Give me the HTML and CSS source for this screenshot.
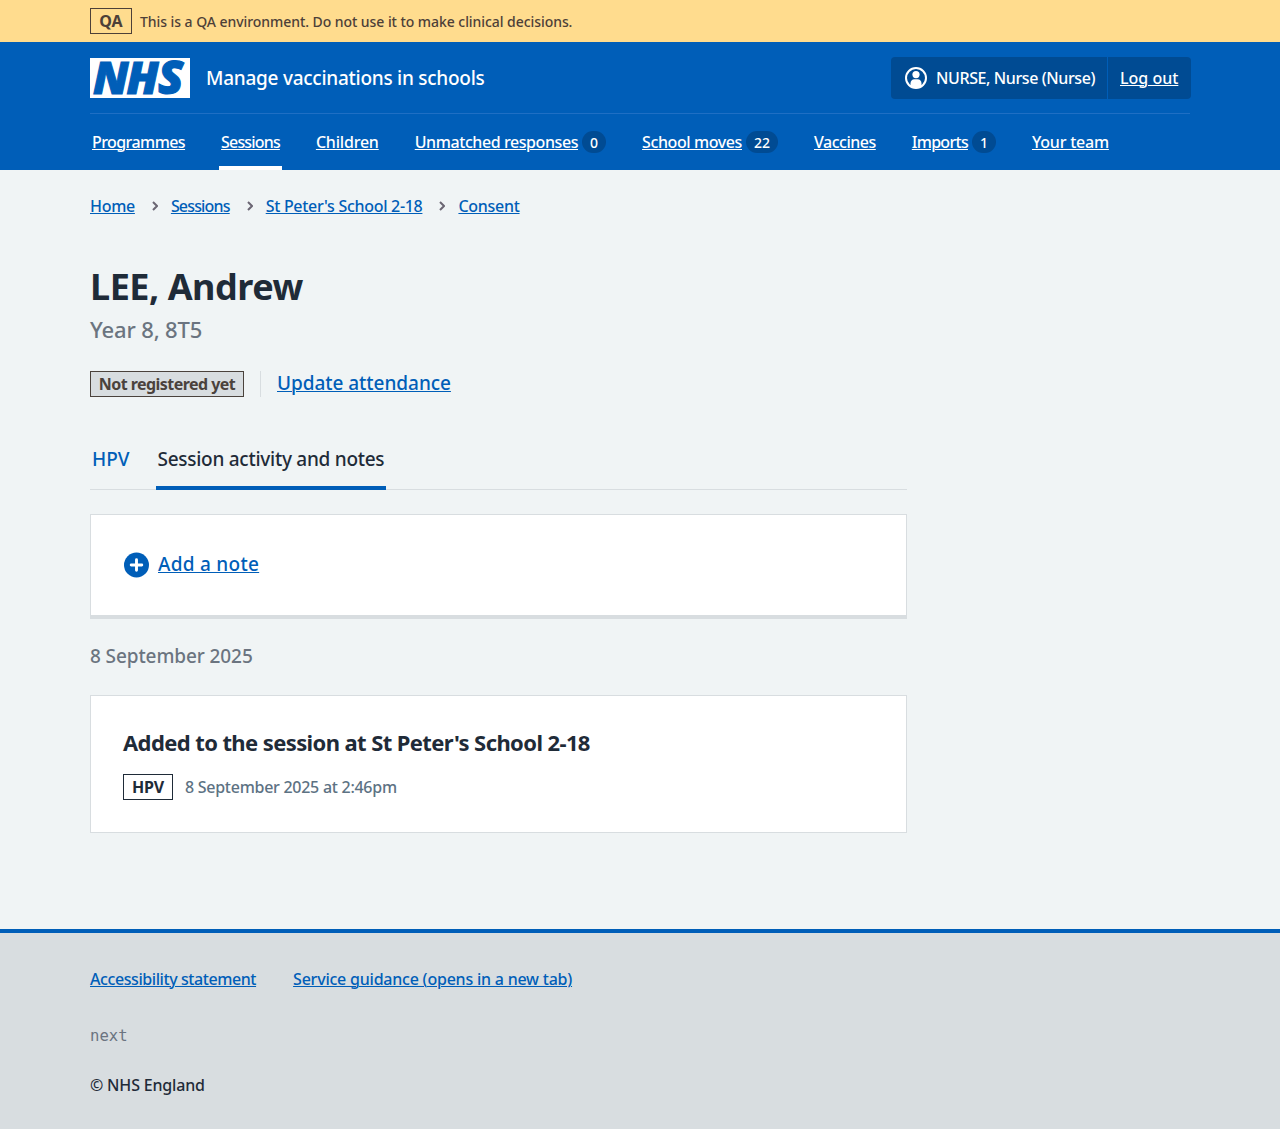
FILE: index.html
```html
<!DOCTYPE html>
<html lang="en">
<head>
<meta charset="utf-8">
<title>LEE, Andrew – Manage vaccinations in schools</title>
<link rel="stylesheet" href="styles.css">
</head>
<body>
<div class="environment">
  <div class="container environment-row">
    <strong class="tag tag-env">QA</strong>
    <span class="environment-text">This is a QA environment. Do not use it to make clinical decisions.</span>
  </div>
</div>
<header class="header">
  <div class="container">
    <div class="header-top">
      <a class="brand" href="#">
        <svg class="logo" viewBox="0 0 100 40" width="100" height="40" role="img" aria-label="NHS">
          <rect width="100" height="40" fill="#fff"/>
          <text class="logo-text" x="3 36.500 68" y="36">NH<tspan class="logo-s">S</tspan></text>
        </svg>
        <span class="service">Manage vaccinations in schools</span>
      </a>
      <div class="account">
        <div class="account-user">
          <svg class="user-icon" viewBox="0 0 24 24" width="24" height="24" aria-hidden="true">
            <circle cx="12" cy="12" r="10" fill="none" stroke="#fff" stroke-width="2"/>
            <circle cx="12" cy="8.600" r="3.600" fill="#fff"/>
            <path d="M6.500 20v-2.500c0-2.500 1.500-4.300 4-4.300h3c2.500 0 4 1.800 4 4.300V20c-1.500 1.200-3.500 2-5.500 2s-4-.8-5.500-2z" fill="#fff"/>
          </svg>
          <span class="user-name">NURSE, Nurse (Nurse)</span>
        </div>
        <a class="logout" href="#"><span>Log out</span></a>
      </div>
    </div>
    <nav class="nav">
      <a class="nav-item" href="#"><span class="nav-label nav-programmes">Programmes</span></a>
      <a class="nav-item nav-current" href="#"><span class="nav-label sessions">Sessions</span></a>
      <a class="nav-item" href="#"><span class="nav-label nav-children">Children</span></a>
      <a class="nav-item" href="#"><span class="nav-label nav-unmatched">Unmatched responses</span><span class="badge">0</span></a>
      <a class="nav-item" href="#"><span class="nav-label nav-moves">School moves</span><span class="badge">22</span></a>
      <a class="nav-item" href="#"><span class="nav-label nav-vaccines">Vaccines</span></a>
      <a class="nav-item" href="#"><span class="nav-label nav-imports">Imports</span><span class="badge">1</span></a>
      <a class="nav-item" href="#"><span class="nav-label nav-team">Your team</span></a>
    </nav>
  </div>
</header>
<div class="container page">
  <nav class="breadcrumb">
    <a class="crumb-home" href="#">Home</a>
    <svg class="chevron" viewBox="0 0 6 10" width="6" height="10"><path d="M1 1l4 4-4 4"/></svg>
    <a class="sessions" href="#">Sessions</a>
    <svg class="chevron" viewBox="0 0 6 10" width="6" height="10"><path d="M1 1l4 4-4 4"/></svg>
    <a class="crumb-school" href="#">St Peter's School 2-18</a>
    <svg class="chevron" viewBox="0 0 6 10" width="6" height="10"><path d="M1 1l4 4-4 4"/></svg>
    <a class="crumb-consent" href="#">Consent</a>
  </nav>
  <main class="main">
    <h1 class="title">LEE, Andrew</h1>
    <p class="caption">Year 8, 8T5</p>
    <div class="actions">
      <strong class="tag tag-grey">Not registered yet</strong>
      <div class="action"><a class="update" href="#">Update attendance</a></div>
    </div>
    <nav class="tabs">
      <a class="tab" href="#">HPV</a>
      <a class="tab tab-current" href="#">Session activity and notes</a>
    </nav>
    <section class="card card-note">
      <svg class="plus-icon" viewBox="0 0 26 26" width="26" height="26" aria-hidden="true">
        <circle cx="12.500" cy="13" r="12.500" fill="#005eb8"/>
        <path d="M12.500 7.700v10.600M7.200 13h10.600" stroke="#fff" stroke-width="2.900" stroke-linecap="round"/>
      </svg>
      <a class="add-note" href="#">Add a note</a>
    </section>
    <h2 class="date">8 September 2025</h2>
    <section class="card card-event">
      <h3 class="event-title">Added to the session at St Peter's School 2-18</h3>
      <div class="event-meta">
        <strong class="tag tag-hpv">HPV</strong>
        <span class="event-time">8 September 2025 at 2:46pm</span>
      </div>
    </section>
  </main>
</div>
<footer class="footer">
  <div class="container">
    <div class="footer-links">
      <a class="link-accessibility" href="#">Accessibility statement</a>
      <a class="link-guidance" href="#">Service guidance (opens in a new tab)</a>
    </div>
    <p class="version">next</p>
    <p class="copyright">© NHS England</p>
  </div>
</footer>
</body>
</html>
```
FILE: styles.css
```css
* { box-sizing: border-box; }
body {
  margin: 0;
  background: #f0f4f5;
  color: #1f2b38;
  font: 500 16px/24px "Noto Sans", "Open Sans", sans-serif;
}
h1, h2, h3, p { margin: 0; }
a { color: #005eb8; text-underline-offset: 1px; text-decoration-thickness: 1px; }
a, span, strong, h1, h2, h3, p { white-space: nowrap; }
.container { width: 1100px; margin: 0 auto; }

.environment { height: 42px; background: #ffdc8e; color: #4d4038; }
.environment-row { display: flex; align-items: center; height: 42px; gap: 8px; }
.environment-text { padding-top: 2px; font-size: 14px; letter-spacing: -0.06px; }
.tag {
  display: flex;
  align-items: center;
  justify-content: center;
  height: 26px;
  border: 1px solid currentColor;
  font-size: 16px;
  font-weight: 700;
  line-height: 24px;
}
.tag-env { width: 42px; }

.header { height: 128px; background: #005eb8; color: #fff; }
.header-top {
  display: flex;
  justify-content: space-between;
  height: 72px;
  border-bottom: 1px solid #1f6fc4;
}
.brand { display: flex; gap: 16px; padding-top: 16px; color: #fff; text-decoration: none; }
.logo { overflow: visible; }
.logo-text {
  font: italic 800 45px "Open Sans", sans-serif;
  fill: #005eb8;
  stroke: #005eb8;
  stroke-width: 1.1px;
}
.logo-s { font-size: 46.500px; }
.service { font-size: 19px; line-height: 40px; letter-spacing: -0.26px; }
.account {
  display: flex;
  width: 300px;
  height: 42px;
  margin: 15px -1px 0 0;
  border-radius: 4px;
  background: #004b93;
}
.account-user {
  display: flex;
  align-items: center;
  gap: 8px;
  width: 217px;
  padding-left: 13px;
  border-right: 1px solid #005eb8;
}
.user-name { letter-spacing: -0.4px; }
.logout { padding-left: 12px; line-height: 42px; color: #fff; }
.nav { display: flex; gap: 32px; height: 56px; }
.nav-item {
  display: flex;
  align-items: center;
  gap: 4px;
  height: 56px;
  padding: 4px 2px 0;
  border-bottom: 4px solid transparent;
  color: #fff;
  text-decoration: none;
}
.nav-label { text-decoration: underline; text-decoration-thickness: 1px; text-underline-offset: 1px; }
.nav-programmes { letter-spacing: -0.57px; }
.sessions { letter-spacing: -0.83px; }
.nav-children { letter-spacing: -0.2px; }
.nav-unmatched { letter-spacing: -0.42px; }
.nav-moves { letter-spacing: -0.4px; }
.nav-vaccines { letter-spacing: -0.49px; }
.nav-imports { letter-spacing: -0.72px; }
.nav-team { letter-spacing: -0.22px; }
.nav-current { border-bottom-color: #fff; }
.badge {
  min-width: 24px;
  height: 22px;
  padding: 0 8px;
  border-radius: 11px;
  background: #004b93;
  font-size: 14px;
  line-height: 23px;
  text-align: center;
}

.page { height: 759px; padding-top: 24px; }
.breadcrumb { display: flex; align-items: center; height: 24px; }
.crumb-home { letter-spacing: -0.3px; }
.crumb-school { letter-spacing: -0.3px; }
.crumb-consent { letter-spacing: -0.28px; }
.chevron { margin: 0 13px 0 17px; fill: none; stroke: #6b6673; stroke-width: 2; }
.main { width: 817px; }
.title { margin-top: 44px; font-size: 36px; line-height: 50px; font-weight: 700; letter-spacing: -0.48px; }
.caption { margin-top: 1px; color: #6b7480; font-size: 22px; line-height: 32px; letter-spacing: -0.15px; }
.actions { display: flex; gap: 16px; margin-top: 26px; }
.tag-grey { width: 154px; background: #d8dde0; color: #4a423c; letter-spacing: -0.55px; }
.action { padding-left: 16px; border-left: 1px solid #d8dde0; font-size: 19px; line-height: 24px; letter-spacing: -0.04px; }
.tabs { display: flex; gap: 24px; height: 50px; margin-top: 43px; border-bottom: 1px solid #d8dde0; }
.tab { height: 50px; padding: 5px 2px 0; font-size: 19px; line-height: 28px; text-decoration: none; }
.tab-current { border-bottom: 4px solid #005eb8; color: #1f2b38; letter-spacing: -0.27px; }
.card { border: 1px solid #d8dde0; background: #fff; }
.card-note {
  display: flex;
  align-items: center;
  gap: 8px;
  height: 105px;
  margin-top: 24px;
  padding-left: 33px;
  border-bottom-width: 4px;
  font-size: 19px;
}
.add-note { padding-bottom: 2px; letter-spacing: 0.27px; }
.date { margin-top: 23px; color: #6b7480; font-size: 19px; line-height: 28px; font-weight: 500; letter-spacing: -0.1px; }
.card-event { height: 138px; margin-top: 25px; padding: 31px 32px; }
.event-title { font-size: 22px; line-height: 31px; font-weight: 700; letter-spacing: -0.6px; }
.event-meta { display: flex; align-items: center; gap: 12px; margin-top: 16px; }
.tag-hpv { width: 50px; letter-spacing: -0.2px; }
.event-time { color: #5d7283; letter-spacing: -0.27px; }

.footer { height: 200px; padding-top: 34px; border-top: 4px solid #005eb8; background: #d8dde0; }
.footer-links { display: flex; gap: 37px; }
.link-accessibility { letter-spacing: -0.42px; }
.link-guidance { letter-spacing: -0.22px; }
.version { margin-top: 33px; color: #6b7480; font: 15.600px/24px "DejaVu Sans Mono", monospace; }
.copyright { margin-top: 25px; letter-spacing: -0.18px; }
```
